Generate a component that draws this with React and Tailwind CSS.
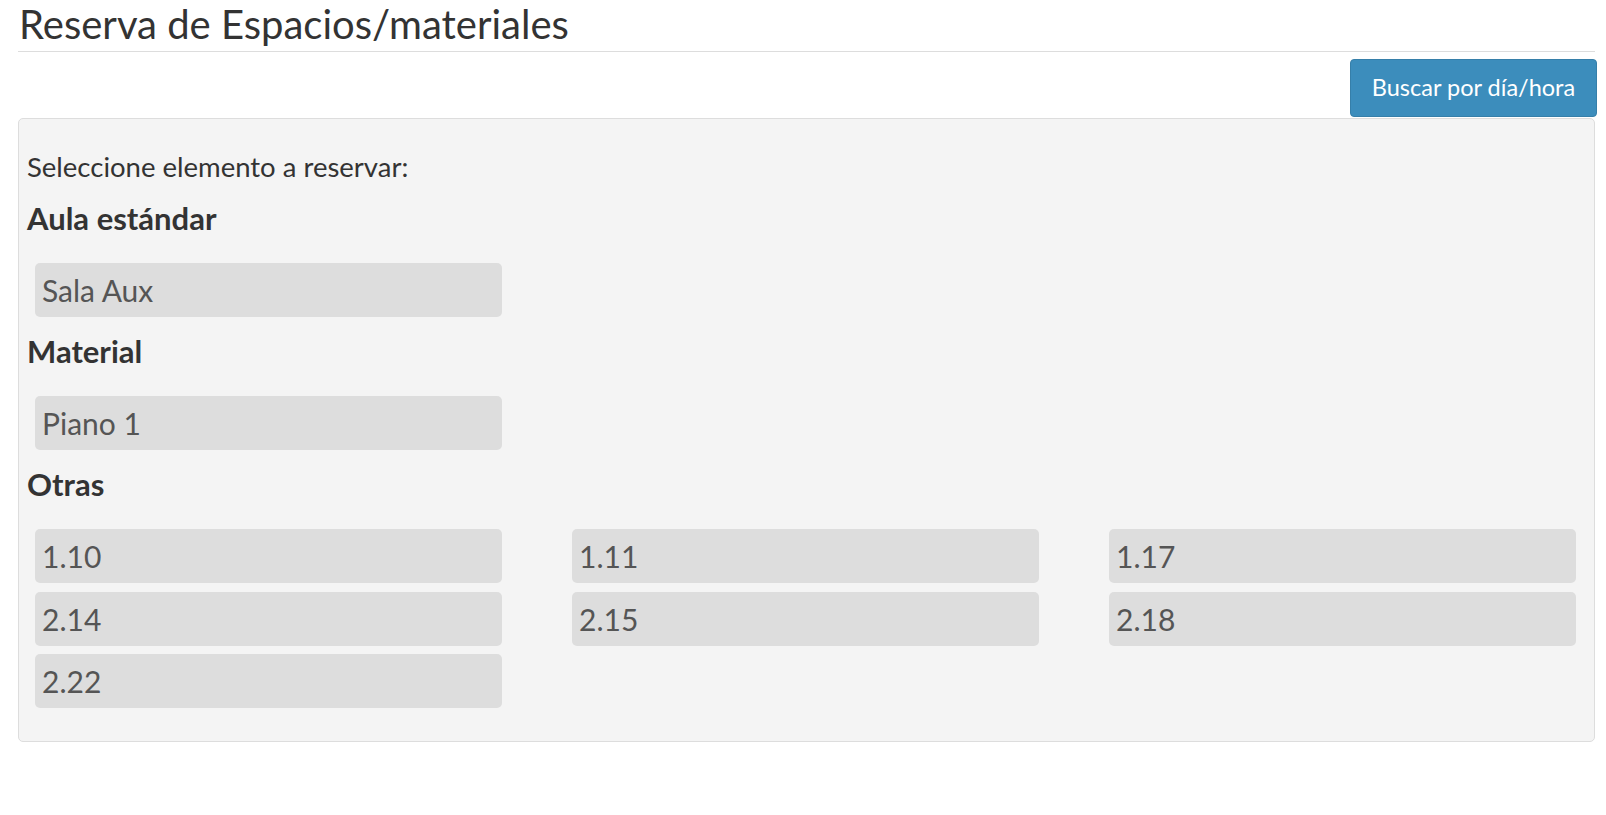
import React from "react";

const otras = ["1.10", "1.11", "1.17", "2.14", "2.15", "2.18", "2.22"];

function Item({ label }) {
  return (
    <button className="h-[54px] w-[467px] rounded-[5px] bg-[#dddddd] pl-[7px] text-left text-[30px] leading-[52px] text-[#555555]">
      {label}
    </button>
  );
}

function Heading({ children }) {
  return <h3 className="mt-[18px] h-[34px] text-[31px] font-bold leading-[33px] text-[#333333]">{children}</h3>;
}

export default function App() {
  return (
    <div className="min-h-screen bg-white pl-[18px] pr-[11px] font-['Lato',sans-serif]">
      {/* Page header */}
      <h1 className="h-[52px] border-b border-[#dddddd] pl-[1px] text-[40px] font-normal leading-[49px] text-[#333333]">
        Reserva de Espacios/materiales
      </h1>

      <div className="-mr-[2px] mt-[7px] flex justify-end">
        <button className="h-[58px] w-[247px] rounded-[4px] border border-[#367fa9] bg-[#3c8dbc] text-[23.5px] text-white">
          Buscar por día/hora
        </button>
      </div>

      {/* Selection panel */}
      <div className="mt-[1px] rounded-[5px] border border-[#dddddd] bg-[#f4f4f4] pb-[33px] pl-[8px] pt-[31px]">
        <p className="h-[34px] text-[27.5px] leading-[33px] text-[#333333]">Seleccione elemento a reservar:</p>

        <Heading>Aula estándar</Heading>
        <div className="ml-[8px] mt-[27px]">
          <Item label="Sala Aux" />
        </div>

        <Heading>Material</Heading>
        <div className="ml-[8px] mt-[27px]">
          <Item label="Piano 1" />
        </div>

        <Heading>Otras</Heading>
        <div className="ml-[8px] mt-[27px] grid grid-cols-[repeat(3,467px)] gap-x-[70px] gap-y-[8.5px]">
          {otras.map((o) => (
            <Item key={o} label={o} />
          ))}
        </div>
      </div>
    </div>
  );
}
